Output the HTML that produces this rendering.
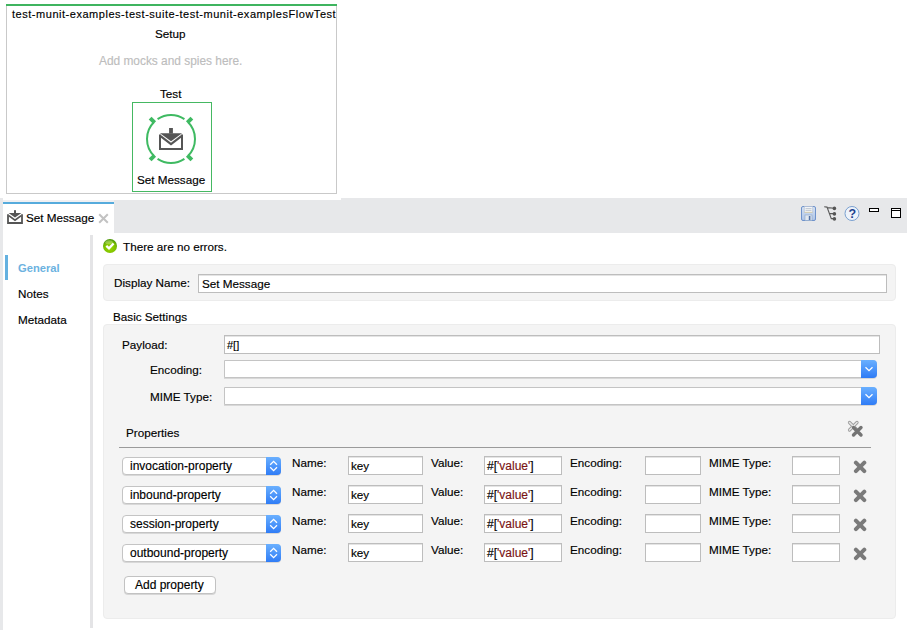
<!DOCTYPE html>
<html><head><meta charset="utf-8">
<style>
*{box-sizing:border-box;margin:0;padding:0}
html,body{width:907px;height:630px;overflow:hidden;background:#fff}
body{position:relative;font-family:"Liberation Sans",sans-serif;font-size:11.7px;color:#000;-webkit-text-stroke:0.15px currentColor}
.a{position:absolute;white-space:nowrap;line-height:1}
.t{position:absolute;white-space:nowrap;line-height:14px;height:14px}
.inp{position:absolute;background:#fff;border:1px solid #bdbdbd;box-shadow:inset 0 1px 0 #e4e4e4}
.sel{position:absolute;background:#fff;border:1px solid #c4c4c4;border-radius:4px;box-shadow:0 1px 0 #d8d8d8}
.sel .b{position:absolute;right:-1px;top:-1px;bottom:-1px;width:15px;background:linear-gradient(#6ab0ff,#2f7cf6);border-radius:0 4px 4px 0}
.x{position:absolute;width:14px;height:14px}
</style></head><body>

<!-- canvas flow box -->
<div class="a" style="left:6px;top:4px;width:331px;height:190px;border:1px solid #c9c9c9;border-top:0"></div>
<div class="a" style="left:6px;top:4px;width:331px;height:2px;background:#3fb45f"></div>
<div class="t" style="left:12px;top:7px;font-size:11px;letter-spacing:0.53px">test-munit-examples-test-suite-test-munit-examplesFlowTest</div>
<div class="t" style="left:155px;top:27px">Setup</div>
<div class="t" style="left:99px;top:54px;color:#bdbdbd;font-size:11.9px">Add mocks and spies here.</div>
<div class="t" style="left:160px;top:87px">Test</div>
<div class="a" style="left:132px;top:102px;width:80px;height:90px;border:1px solid #45b862"></div>
<svg class="a" style="left:140px;top:108px" width="62" height="62" viewBox="0 0 62 62">
  <path d="M17.58 11.10A24 24 0 0 1 44.42 11.10M47.97 14.03A24 24 0 0 1 47.97 47.97M44.42 50.90A24 24 0 0 1 17.58 50.90M14.03 47.97A24 24 0 0 1 14.03 14.03" fill="none" stroke="#3fba62" stroke-width="2"/>
  <g fill="#3fba62">
<rect x="-3.2" y="-2" width="6.4" height="4" transform="translate(12.40,12.40) rotate(-135)"/>
<rect x="-3.2" y="-2" width="6.4" height="4" transform="translate(49.60,12.40) rotate(-45)"/>
<rect x="-3.2" y="-2" width="6.4" height="4" transform="translate(49.60,49.60) rotate(45)"/>
<rect x="-3.2" y="-2" width="6.4" height="4" transform="translate(12.40,49.60) rotate(135)"/>
  </g>
  <g>
    <path d="M20 26.5V41H42V26.5" fill="none" stroke="#555" stroke-width="2"/>
    <path d="M20 25.3H42L31 33.2Z" fill="#555"/>
    <path d="M20.6 28.2L31 36.2L41.4 28.2" fill="none" stroke="#555" stroke-width="2.2"/>
    <rect x="29.1" y="20" width="3.8" height="5.5" fill="#555"/>
  </g>
</svg>
<div class="t" style="left:137px;top:173px">Set Message</div>

<!-- tab bar -->
<div class="a" style="left:0;top:200px;width:341px;height:33px;background:#e7e8ea"></div>
<div class="a" style="left:341px;top:198px;width:566px;height:35px;background:#e7e8ea"></div>
<div class="a" style="left:0;top:198px;width:3px;height:432px;background:#e7e8ea"></div>
<div class="a" style="left:3px;top:200px;width:111px;height:34px;background:#fff;border-top:2px solid #f0f0f2"></div>
<div class="a" style="left:3px;top:202px;width:111px;height:2px;background:#56abdc"></div>
<svg class="a" style="left:7px;top:209px" width="17" height="16" viewBox="0 0 17 16">
  <path d="M1 5.2V14H15V5.2" fill="none" stroke="#555" stroke-width="1.8"/>
  <path d="M1.6 4H14.4L8 8.4Z" fill="#555"/>
  <path d="M1.8 6.6L8 11.2L14.2 6.6" fill="none" stroke="#555" stroke-width="1.8"/>
  <rect x="7" y="1.2" width="2" height="3.5" fill="#555"/>
</svg>
<div class="t" style="left:26px;top:211px">Set Message</div>
<svg class="a" style="left:98px;top:213px" width="11" height="11" viewBox="0 0 11 11"><path d="M1.2 1.2L9.8 9.8M9.8 1.2L1.2 9.8" stroke="#c2c2c2" stroke-width="2"/></svg>

<!-- toolbar icons -->
<svg class="a" style="left:800px;top:205px" width="17" height="17" viewBox="0 0 17 17">
  <defs><linearGradient id="sv" x1="0" y1="0" x2="0" y2="1"><stop offset="0" stop-color="#d6e2f3"/><stop offset="1" stop-color="#aec4e6"/></linearGradient></defs>
  <rect x="1.5" y="1.5" width="14" height="14" rx="1.5" fill="url(#sv)" stroke="#6e92cb" stroke-width="1"/>
  <rect x="4.2" y="1.5" width="8.6" height="6" fill="#f3f5f7" stroke="#a8b8d0" stroke-width="0.6"/>
  <path d="M4.5 7.3H12.5" stroke="#d9cfa8" stroke-width="0.9"/>
  <path d="M5.5 3.6H11.5M5.5 5.4H11.5" stroke="#a7b3c3" stroke-width="0.7"/>
  <rect x="5" y="10" width="7" height="5.5" fill="#e2e8f0" stroke="#88a2c8" stroke-width="0.6"/>
  <rect x="8.8" y="11" width="1.6" height="4" fill="#5373a8"/>
</svg>
<svg class="a" style="left:823px;top:205px" width="15" height="17" viewBox="0 0 15 17">
  <path d="M1.2 1.8L4 2.1L8.3 13.6H11.4M4.3 2.6L11.4 3.3M6.3 8.6H11.4" fill="none" stroke="#5a5a5a" stroke-width="1.1"/>
  <circle cx="11.4" cy="3.4" r="1.8" fill="#555"/><circle cx="11.4" cy="8.9" r="1.8" fill="#555"/><circle cx="11.4" cy="13.9" r="1.8" fill="#555"/>
</svg>
<svg class="a" style="left:844px;top:205px" width="17" height="17" viewBox="0 0 17 17">
  <circle cx="8" cy="8.5" r="7" fill="#eef3fa" stroke="#7aa0d0" stroke-width="1"/>
  <text x="8.2" y="13.2" text-anchor="middle" font-family="Liberation Sans" font-weight="bold" font-size="12.5" fill="#1e428e">?</text>
</svg>
<div class="a" style="left:869px;top:208px;width:10px;height:4px;border:1px solid #000;background:#fff"></div>
<div class="a" style="left:891px;top:208px;width:10px;height:10px;border:1px solid #000;background:#fff"><div style="position:absolute;left:0;right:0;top:1px;height:1px;background:#000"></div></div>

<!-- left nav -->
<div class="a" style="left:90px;top:235px;width:3px;height:393px;background:#e4e4e6"></div>
<div class="a" style="left:5px;top:255px;width:3px;height:25px;background:#64b1e0"></div>
<div class="t" style="left:18px;top:261px;color:#6cb2df;font-weight:bold;font-size:11.2px;-webkit-text-stroke:0">General</div>
<div class="t" style="left:18px;top:287px">Notes</div>
<div class="t" style="left:18px;top:313px">Metadata</div>

<!-- status -->
<svg class="a" style="left:102px;top:238px" width="16" height="16" viewBox="0 0 16 16">
  <defs><radialGradient id="g1" cx="50%" cy="65%" r="60%"><stop offset="0" stop-color="#9cd800"/><stop offset="0.7" stop-color="#7cc000"/><stop offset="1" stop-color="#4f9a0a"/></radialGradient></defs>
  <circle cx="8" cy="8" r="7" fill="url(#g1)"/>
  <ellipse cx="7" cy="4.2" rx="3.8" ry="2" fill="#fff" opacity="0.25"/>
  <path d="M4.3 7.8L7 10.3L11.6 5.5" fill="none" stroke="#fff" stroke-width="2.3"/>
</svg>
<div class="t" style="left:123px;top:240px">There are no errors.</div>

<!-- display name panel -->
<div class="a" style="left:103px;top:264px;width:793px;height:37px;background:#f4f4f4;border:1px solid #ececec;border-radius:4px"></div>
<div class="t" style="left:114px;top:276px">Display Name:</div>
<div class="inp" style="left:198px;top:274px;width:689px;height:19px"></div>
<div class="t" style="left:202px;top:277px">Set Message</div>

<!-- basic settings -->
<div class="t" style="left:113px;top:310px">Basic Settings</div>
<div class="a" style="left:103px;top:324px;width:793px;height:295px;background:#f4f4f4;border:1px solid #ececec;border-radius:4px"></div>
<div class="t" style="left:122px;top:338px">Payload:</div>
<div class="inp" style="left:224px;top:335px;width:656px;height:19px"></div>
<div class="t" style="left:227px;top:338px;font-size:11px">#[]</div>
<div class="t" style="left:150px;top:363px">Encoding:</div>
<div class="sel" style="left:224px;top:360px;width:653px;height:18px;border-radius:0 4px 4px 0"><div class="b" style="width:16px"><svg width="16" height="18" viewBox="0 0 16 18" style="position:absolute;left:0;top:0"><path d="M4.5 7.2L8 10.7L11.5 7.2" fill="none" stroke="#fff" stroke-width="1.3"/></svg></div></div>
<div class="t" style="left:150px;top:390px">MIME Type:</div>
<div class="sel" style="left:224px;top:387px;width:653px;height:18px;border-radius:0 4px 4px 0"><div class="b" style="width:16px"><svg width="16" height="18" viewBox="0 0 16 18" style="position:absolute;left:0;top:0"><path d="M4.5 7.2L8 10.7L11.5 7.2" fill="none" stroke="#fff" stroke-width="1.3"/></svg></div></div>

<div class="t" style="left:126px;top:426px">Properties</div>
<svg class="a" style="left:846px;top:419px" width="20" height="20" viewBox="0 0 20 20">
<path d="M3.5 3.5L11 11M11 3.5L3.5 11" stroke="#9a9a9a" stroke-width="3.2" stroke-linecap="round"/>
<path d="M3.5 3.5L11 11M11 3.5L3.5 11" stroke="#e6e6e6" stroke-width="1.6" stroke-linecap="round"/>
<path d="M7.5 8.5L15 16M15 8.5L7.5 16" stroke="#747474" stroke-width="3.4" stroke-linecap="round"/>
</svg>
<div class="a" style="left:119px;top:447px;width:752px;height:1px;background:#9a9a9a"></div>

<!-- rows -->
<div class="sel" style="left:122px;top:457px;width:159px;height:18px"><div class="b"><svg width="15" height="18" viewBox="0 0 15 18" style="position:absolute;left:0;top:0"><path d="M4.2 7.7L7.6 4.3L11 7.7M4.2 10.3L7.6 13.6L11 10.3" fill="none" stroke="#fff" stroke-width="1.3"/></svg></div></div>
<div class="t" style="font-size:12px;left:130px;top:459px">invocation-property</div>
<div class="t" style="left:292px;top:456px">Name:</div>
<div class="inp" style="left:348px;top:456px;width:75px;height:19px"></div>
<div class="t" style="left:351px;top:459px">key</div>
<div class="t" style="left:431px;top:456px">Value:</div>
<div class="inp" style="left:484px;top:456px;width:78px;height:19px"></div>
<div class="t" style="font-size:12px;left:487px;top:459px">#[<span style="color:#7a1414">'value'</span>]</div>
<div class="t" style="left:570px;top:456px">Encoding:</div>
<div class="inp" style="left:645px;top:456px;width:56px;height:19px"></div>
<div class="t" style="left:709px;top:456px">MIME Type:</div>
<div class="inp" style="left:792px;top:456px;width:48px;height:19px"></div>
<svg class="x" style="left:853px;top:460px" viewBox="0 0 14 14"><path d="M2.9 2.7L11.3 11.1M11.3 2.7L2.9 11.1" stroke="#7a7a7a" stroke-width="4" stroke-linecap="round"/></svg>
<div class="sel" style="left:122px;top:486px;width:159px;height:18px"><div class="b"><svg width="15" height="18" viewBox="0 0 15 18" style="position:absolute;left:0;top:0"><path d="M4.2 7.7L7.6 4.3L11 7.7M4.2 10.3L7.6 13.6L11 10.3" fill="none" stroke="#fff" stroke-width="1.3"/></svg></div></div>
<div class="t" style="font-size:12px;left:130px;top:488px">inbound-property</div>
<div class="t" style="left:292px;top:485px">Name:</div>
<div class="inp" style="left:348px;top:485px;width:75px;height:19px"></div>
<div class="t" style="left:351px;top:488px">key</div>
<div class="t" style="left:431px;top:485px">Value:</div>
<div class="inp" style="left:484px;top:485px;width:78px;height:19px"></div>
<div class="t" style="font-size:12px;left:487px;top:488px">#[<span style="color:#7a1414">'value'</span>]</div>
<div class="t" style="left:570px;top:485px">Encoding:</div>
<div class="inp" style="left:645px;top:485px;width:56px;height:19px"></div>
<div class="t" style="left:709px;top:485px">MIME Type:</div>
<div class="inp" style="left:792px;top:485px;width:48px;height:19px"></div>
<svg class="x" style="left:853px;top:489px" viewBox="0 0 14 14"><path d="M2.9 2.7L11.3 11.1M11.3 2.7L2.9 11.1" stroke="#7a7a7a" stroke-width="4" stroke-linecap="round"/></svg>
<div class="sel" style="left:122px;top:515px;width:159px;height:18px"><div class="b"><svg width="15" height="18" viewBox="0 0 15 18" style="position:absolute;left:0;top:0"><path d="M4.2 7.7L7.6 4.3L11 7.7M4.2 10.3L7.6 13.6L11 10.3" fill="none" stroke="#fff" stroke-width="1.3"/></svg></div></div>
<div class="t" style="font-size:12px;left:130px;top:517px">session-property</div>
<div class="t" style="left:292px;top:514px">Name:</div>
<div class="inp" style="left:348px;top:514px;width:75px;height:19px"></div>
<div class="t" style="left:351px;top:517px">key</div>
<div class="t" style="left:431px;top:514px">Value:</div>
<div class="inp" style="left:484px;top:514px;width:78px;height:19px"></div>
<div class="t" style="font-size:12px;left:487px;top:517px">#[<span style="color:#7a1414">'value'</span>]</div>
<div class="t" style="left:570px;top:514px">Encoding:</div>
<div class="inp" style="left:645px;top:514px;width:56px;height:19px"></div>
<div class="t" style="left:709px;top:514px">MIME Type:</div>
<div class="inp" style="left:792px;top:514px;width:48px;height:19px"></div>
<svg class="x" style="left:853px;top:518px" viewBox="0 0 14 14"><path d="M2.9 2.7L11.3 11.1M11.3 2.7L2.9 11.1" stroke="#7a7a7a" stroke-width="4" stroke-linecap="round"/></svg>
<div class="sel" style="left:122px;top:544px;width:159px;height:18px"><div class="b"><svg width="15" height="18" viewBox="0 0 15 18" style="position:absolute;left:0;top:0"><path d="M4.2 7.7L7.6 4.3L11 7.7M4.2 10.3L7.6 13.6L11 10.3" fill="none" stroke="#fff" stroke-width="1.3"/></svg></div></div>
<div class="t" style="font-size:12px;left:130px;top:546px">outbound-property</div>
<div class="t" style="left:292px;top:543px">Name:</div>
<div class="inp" style="left:348px;top:543px;width:75px;height:19px"></div>
<div class="t" style="left:351px;top:546px">key</div>
<div class="t" style="left:431px;top:543px">Value:</div>
<div class="inp" style="left:484px;top:543px;width:78px;height:19px"></div>
<div class="t" style="font-size:12px;left:487px;top:546px">#[<span style="color:#7a1414">'value'</span>]</div>
<div class="t" style="left:570px;top:543px">Encoding:</div>
<div class="inp" style="left:645px;top:543px;width:56px;height:19px"></div>
<div class="t" style="left:709px;top:543px">MIME Type:</div>
<div class="inp" style="left:792px;top:543px;width:48px;height:19px"></div>
<svg class="x" style="left:853px;top:547px" viewBox="0 0 14 14"><path d="M2.9 2.7L11.3 11.1M11.3 2.7L2.9 11.1" stroke="#7a7a7a" stroke-width="4" stroke-linecap="round"/></svg>

<div class="a" style="left:124px;top:576px;width:92px;height:18px;background:#fff;border:1px solid #c2c2c2;border-radius:4px;box-shadow:0 1px 0 #d6d6d6"></div>
<div class="t" style="left:135px;top:578px;font-size:12px">Add property</div>

</body></html>
